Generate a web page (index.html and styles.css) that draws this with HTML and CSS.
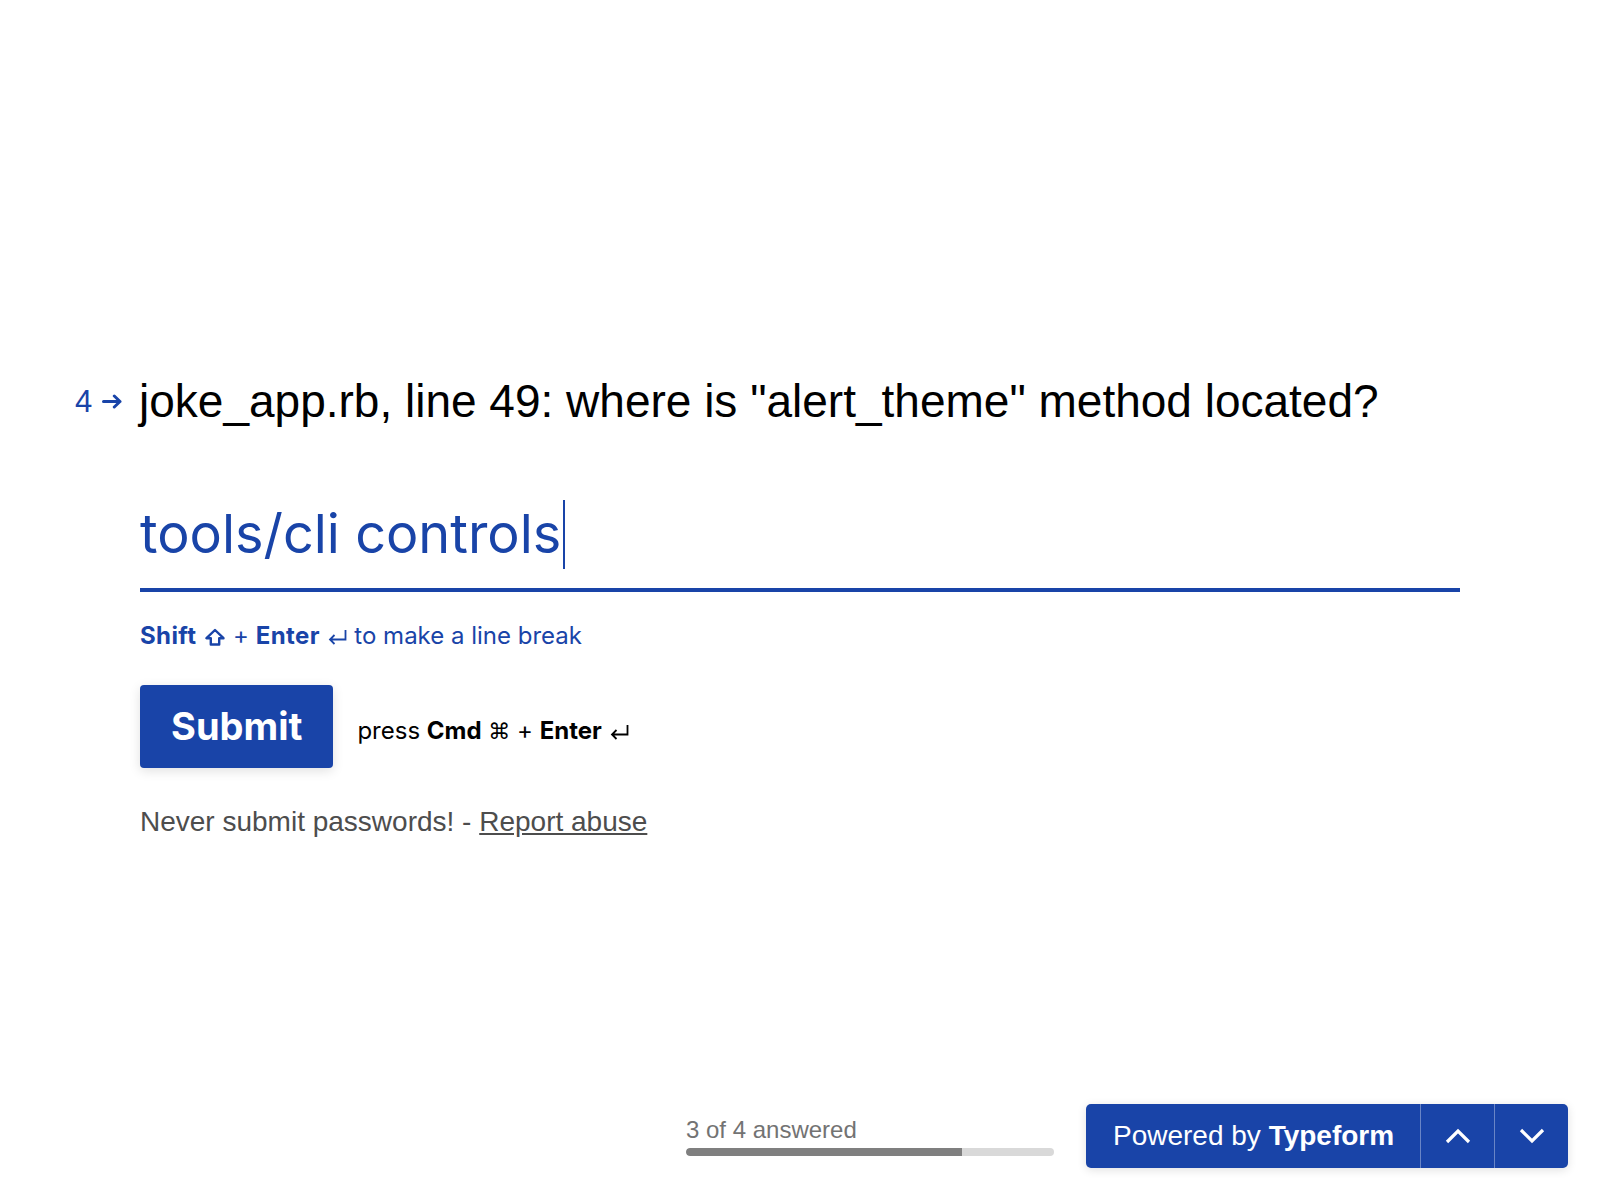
FILE: index.html
```html
<!DOCTYPE html>
<html lang="en">
<head>
<meta charset="utf-8">
<title>Typeform</title>
<link rel="stylesheet" href="styles.css">
</head>
<body>
<main class="page">
  <section class="question">
    <div class="qnum">
      <span class="qnum-digit">4</span>
      <svg class="qarrow" width="21" height="15" viewBox="0 0 21 15"><path d="M1.5 7.5H18M12.3 2L18 7.5L12.3 13" fill="none" stroke="currentColor" stroke-width="3" stroke-linecap="round" stroke-linejoin="round"/></svg>
    </div>
    <h1 class="qtext">joke_app.rb, line 49: where is "alert_theme" method located?</h1>
  </section>
  <section class="answer">
    <div class="answer-field"><span class="answer-text">tools/cli controls</span><span class="caret"></span></div>
    <p class="hint"><b>Shift</b> <svg class="key-icon shift-icon" width="20" height="19" viewBox="0 0 20 19"><path d="M10 2L1.5 10.2H5.8V16.5H14.2V10.2H18.5Z" fill="none" stroke="currentColor" stroke-width="2.4" stroke-linejoin="round"/></svg> + <b>Enter</b> <svg class="key-icon ret-icon" width="20" height="16" viewBox="0 0 20 16"><path d="M18.5 1V10.5H3M7.5 6L3 10.5L7.5 15" fill="none" stroke="currentColor" stroke-width="1.8"/></svg> to make a line break</p>
    <div class="actions">
      <button class="submit" type="button">Submit</button>
      <span class="press">press <b>Cmd</b> <span class="cmd">⌘</span> + <b>Enter</b> <svg class="key-icon" width="20" height="16" viewBox="0 0 20 16"><path d="M18.5 1V10.5H3M7.5 6L3 10.5L7.5 15" fill="none" stroke="currentColor" stroke-width="1.8"/></svg></span>
    </div>
    <p class="warning">Never submit passwords! - <a class="report" href="#">Report abuse</a></p>
  </section>
</main>
<footer class="footer">
  <div class="progress">
    <div class="progress-label">3 of 4 answered</div>
    <div class="progress-track"><div class="progress-fill" style="width:75%"></div></div>
  </div>
  <div class="powered">
    <div class="brand">Powered by <b>Typeform</b></div>
    <div class="nav-btn"><svg width="26" height="16" viewBox="0 0 26 16"><path d="M2 14L13 3L24 14" fill="none" stroke="#fff" stroke-width="3.2"/></svg></div>
    <div class="nav-btn"><svg width="26" height="16" viewBox="0 0 26 16"><path d="M2 2L13 13L24 2" fill="none" stroke="#fff" stroke-width="3.2"/></svg></div>
  </div>
</footer>
</body>
</html>
```
FILE: styles.css
```css
* { box-sizing: border-box; }
html, body { margin: 0; padding: 0; }
body {
  width: 1600px;
  height: 1200px;
  background: #fff;
  font-family: "Liberation Sans", Arial, sans-serif;
  display: flex;
  flex-direction: column;
  overflow: hidden;
}
.page {
  flex: 1;
  padding-top: 373px;
}
.question {
  display: flex;
  align-items: center;
  padding-left: 75px;
}
.qnum {
  width: 64px;
  flex: none;
  display: flex;
  align-items: center;
  gap: 10px;
  color: #1944a8;
  font-size: 31px;
  line-height: 30px;
}
.qarrow { display: block; }
.qtext {
  margin: 0;
  font-size: 46px;
  font-weight: 400;
  line-height: 1.25;
  color: #000;
}
.answer {
  margin-left: 140px;
  width: 1320px;
}
.answer-field {
  margin-top: 69px;
  display: flex;
  align-items: center;
  padding-bottom: 19px;
  border-bottom: 4px solid #1944a8;
}
.answer-text {
  font-family: Inter, "Liberation Sans", sans-serif;
  font-size: 54px;
  line-height: 1.2;
  color: #1944a8;
}
.caret {
  width: 2px;
  height: 69px;
  margin-left: 2px;
  background: #1944a8;
}
.hint {
  margin: 26px 0 0;
  font-family: Inter, "Liberation Sans", sans-serif;
  font-size: 24px;
  line-height: 36px;
  color: #1944a8;
}
.hint b { font-weight: 700; letter-spacing: 0.4px; }
.press b { font-weight: 700; }
.key-icon { vertical-align: -1px; }
.shift-icon { vertical-align: -3px; margin: 0 1px 0 2px; }
.ret-icon { margin: 0 1px 0 0; }
.actions {
  margin-top: 31px;
  display: flex;
  align-items: center;
  gap: 24px;
}
.submit {
  height: 83px;
  padding: 0 31px;
  border: none;
  border-radius: 4px;
  background: #1944a8;
  color: #fff;
  font-family: Inter, "Liberation Sans", sans-serif;
  font-size: 38px;
  font-weight: 700;
  box-shadow: 0 3px 12px rgba(0, 0, 0, 0.12);
}
.press {
  margin-top: 8px;
  font-family: Inter, "Liberation Sans", sans-serif;
  font-size: 24px;
  color: #000;
}
.cmd { font-family: "DejaVu Sans", sans-serif; font-size: 22px; }
.warning {
  margin: 36px 0 0;
  font-size: 28px;
  line-height: 1.3;
  color: #4d4d4d;
}
.report { color: #4d4d4d; }
.footer {
  display: flex;
  justify-content: flex-end;
  align-items: center;
  gap: 32px;
  padding: 0 32px 32px 0;
}
.progress { width: 368px; }
.progress-label {
  font-size: 24px;
  line-height: 1.2;
  color: #737373;
}
.progress-track {
  margin-top: 4px;
  height: 8px;
  border-radius: 4px;
  background: #d9d9d9;
  overflow: hidden;
}
.progress-fill {
  height: 100%;
  background: #7f7f7f;
  border-radius: 4px 0 0 4px;
}
.powered {
  display: flex;
  height: 64px;
  background: #1944a8;
  border-radius: 5px;
  box-shadow: 0 2px 10px rgba(0, 0, 0, 0.12);
  color: #fff;
}
.brand {
  width: 334px;
  display: flex;
  align-items: center;
  padding-left: 27px;
  font-size: 28px;
  white-space: pre;
}
.nav-btn {
  width: 74px;
  display: flex;
  align-items: center;
  justify-content: center;
  border-left: 1px solid rgba(255, 255, 255, 0.35);
}
.nav-btn svg { display: block; }
```
